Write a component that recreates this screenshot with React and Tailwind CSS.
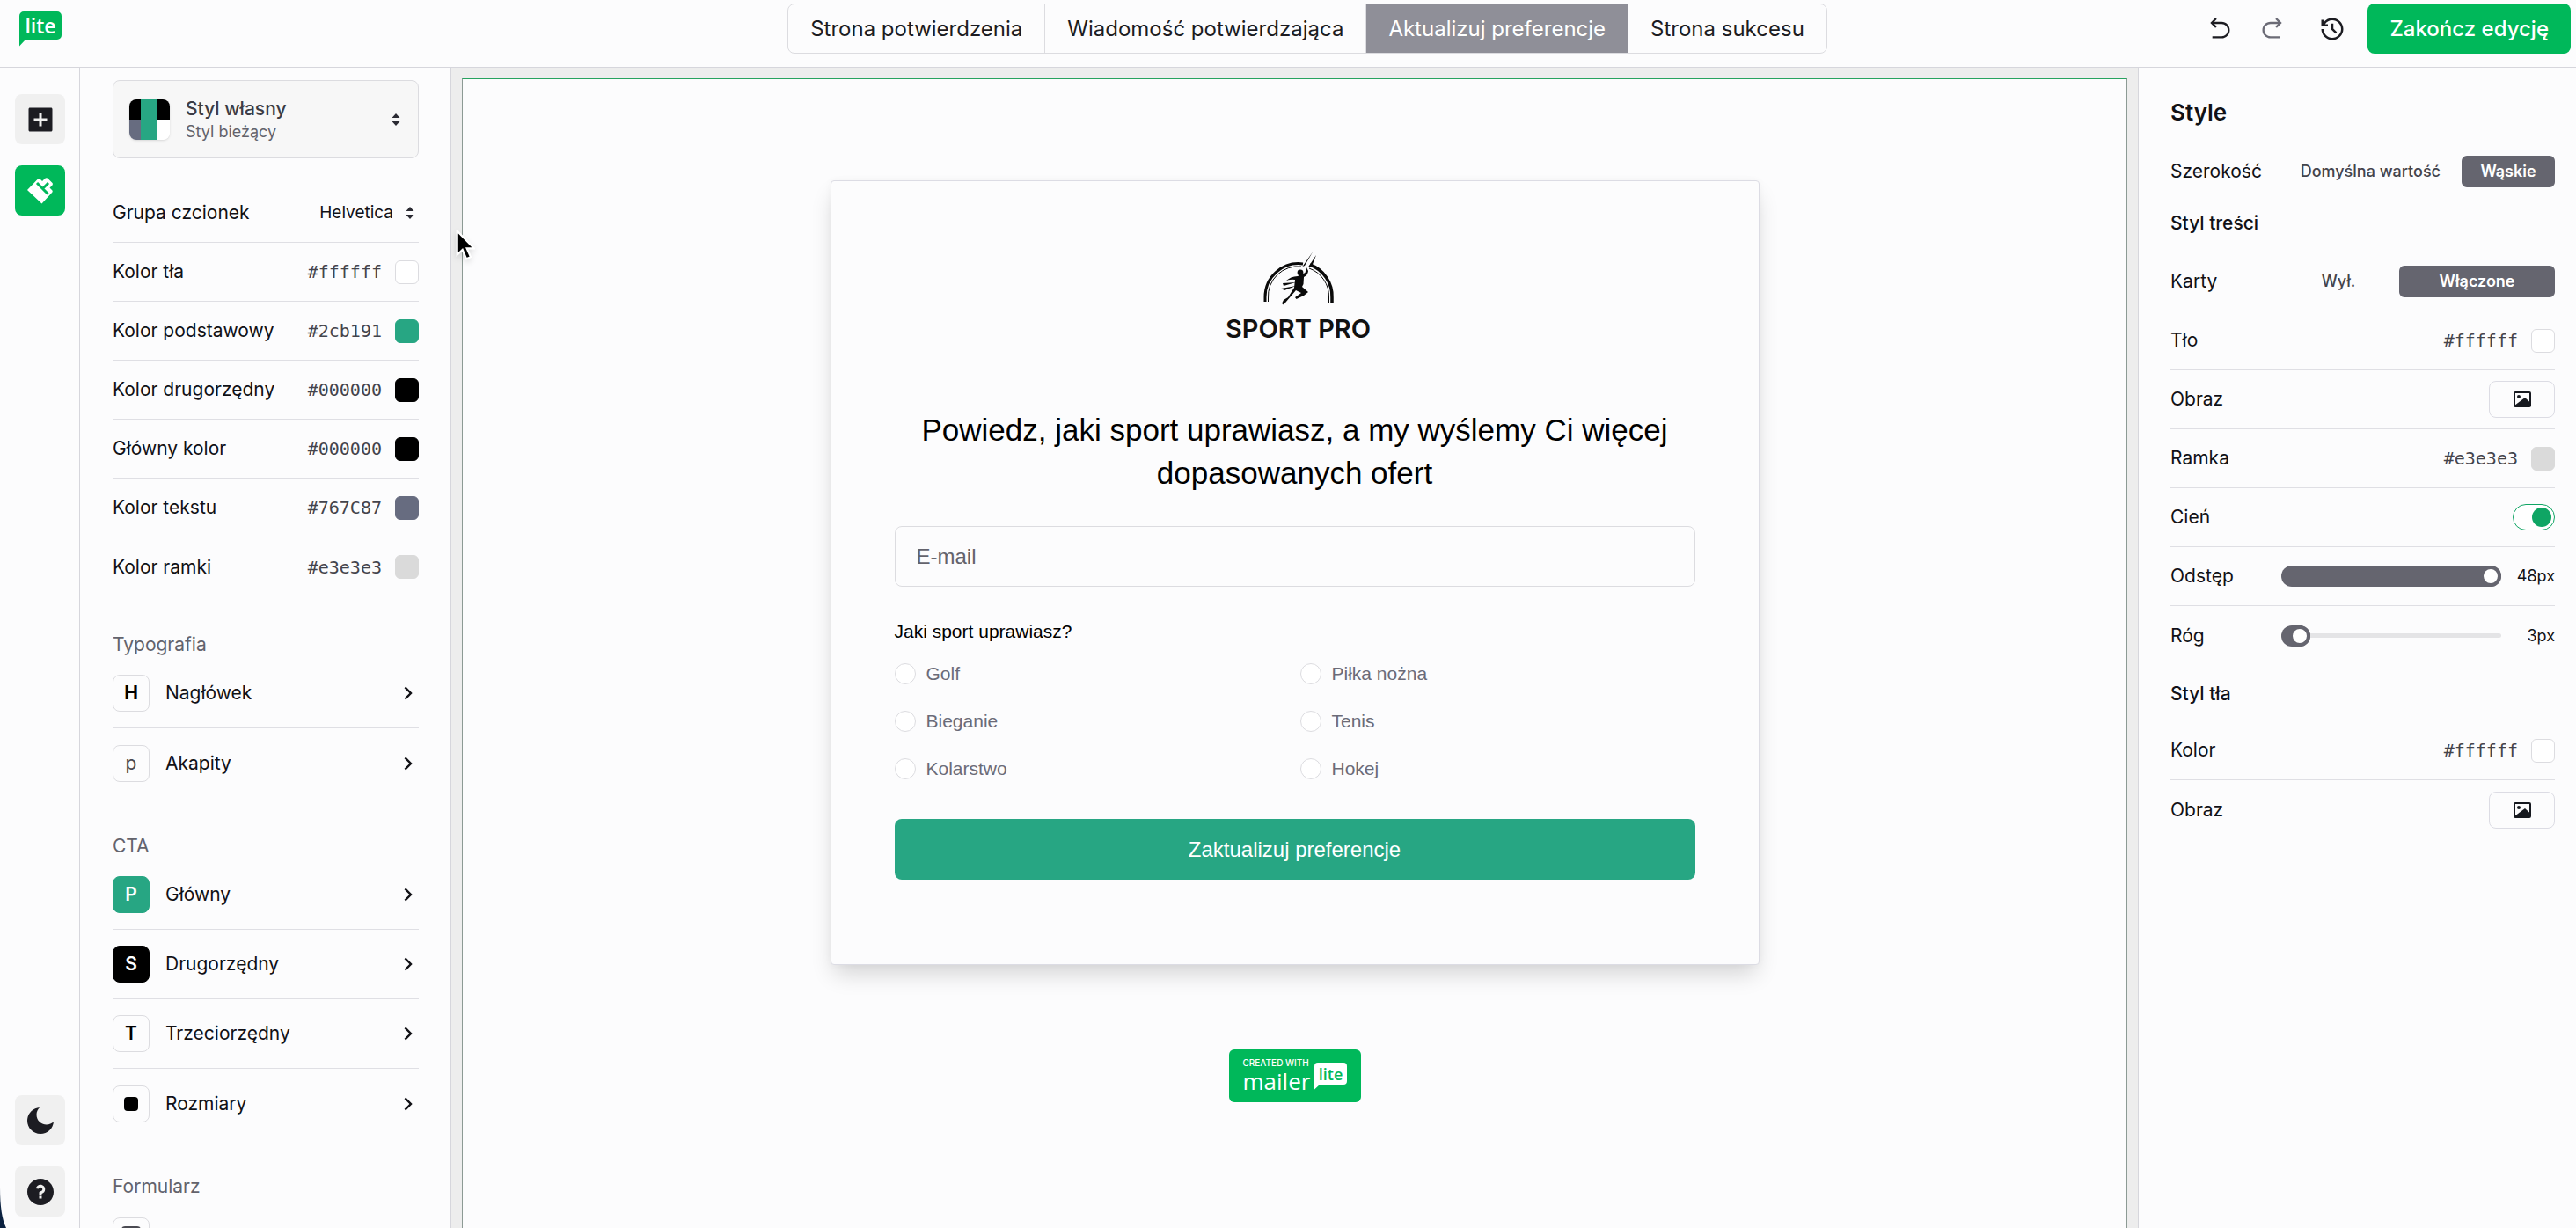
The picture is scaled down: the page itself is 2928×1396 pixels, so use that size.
import React from "react";
import {
  RiAddBoxFill,
  RiArrowGoBackLine,
  RiArrowGoForwardLine,
  RiArrowRightSLine,
  RiHistoryLine,
  RiMoonFill,
  RiQuestionFill,
} from "react-icons/ri";

const tabs = [
  { label: "Strona potwierdzenia" },
  { label: "Wiadomość potwierdzająca" },
  { label: "Aktualizuj preferencje", active: true },
  { label: "Strona sukcesu" },
];

const colors = [
  { id: "bg", label: "Kolor tła", value: "#ffffff", swatch: "bg-white border-[#dcdce0]" },
  { id: "base", label: "Kolor podstawowy", value: "#2cb191", swatch: "bg-[#27a683] border-[#27a683]" },
  { id: "secondary", label: "Kolor drugorzędny", value: "#000000", swatch: "bg-black border-black" },
  { id: "main", label: "Główny kolor", value: "#000000", swatch: "bg-black border-black" },
  { id: "text", label: "Kolor tekstu", value: "#767C87", swatch: "bg-[#676c80] border-[#676c80]" },
  { id: "border", label: "Kolor ramki", value: "#e3e3e3", swatch: "bg-[#dadada] border-[#dadada]" },
];

const typography = [
  { label: "Nagłówek", badge: "H", style: "border-[#dcdce0] text-black font-bold" },
  { label: "Akapity", badge: "p", style: "border-[#dcdce0] text-[#4a4a52]" },
];

const cta = [
  { label: "Główny", badge: "P", style: "border-[#27a683] bg-[#27a683] text-white font-semibold" },
  { label: "Drugorzędny", badge: "S", style: "border-black bg-black text-white font-semibold" },
  { label: "Trzeciorzędny", badge: "T", style: "border-[#dcdce0] text-black font-semibold" },
  { label: "Rozmiary", badge: <span className="block size-4 rounded-sm bg-black" />, style: "border-[#dcdce0]" },
];

const sports = ["Golf", "Piłka nożna", "Bieganie", "Tenis", "Kolarstwo", "Hokej"];

const LiteLogo = () => (
  <svg viewBox="0 0 48 40" className="w-12 h-10" role="img" aria-label="lite">
    <path d="M5 0H43a5 5 0 0 1 5 5V27a5 5 0 0 1-5 5H7L0 39.500V5a5 5 0 0 1 5-5Z" fill="#00b85a" />
    <text x="24" y="25" textAnchor="middle" fill="#fff" fontSize="23" fontWeight="600" fontFamily="Open Sans, sans-serif">
      lite
    </text>
  </svg>
);

const SortIcon = () => (
  <svg viewBox="0 0 10 16" className="w-[10px] h-4 shrink-0" fill="#2b2b33">
    <path d="M5 1 9.500 6H.5ZM5 15 .5 10H9.500Z" />
  </svg>
);

const BrushIcon = () => (
  <svg viewBox="0 0 30 30" className="size-[30px]">
    <path
      d="M0 14 12 1.500Q13.500 .5 15 2L17 4 20 1Q22 -.5 24 1.500L28.500 6Q29.500 7.500 28 9L25.500 11.500 28 14Q29.500 15.500 28 17L16.500 29.500Z"
      fill="#fff"
    />
    <path d="M11 6 23.500 18.500M17.500 12.500 24 6" stroke="#00b85a" strokeWidth="3" fill="none" />
  </svg>
);

const ImageIcon = () => (
  <svg viewBox="0 0 20 18" className="w-5 h-[18px]">
    <rect x="1" y="1" width="18" height="16" rx="1" fill="none" stroke="#16191f" strokeWidth="2" />
    <circle cx="6" cy="6" r="2" fill="#16191f" />
    <path d="M1 16 13 7 19 12.500V17H1Z" fill="#16191f" />
  </svg>
);

const SportLogo = () => (
  <div className="flex flex-col items-center pl-2">
    <svg viewBox="0 0 82 62" className="w-[82px] h-[62px]" aria-hidden="true">
      <path d="M3 57V52A38 38 0 0 1 46 14" fill="none" stroke="#0a0a0a" strokeWidth="3" />
      <path d="M6.500 57V53A34 34 0 0 1 44 17" fill="none" stroke="#0a0a0a" strokeWidth="1" />
      <path d="M54 15A38 38 0 0 1 79 52V59" fill="none" stroke="#0a0a0a" strokeWidth="3.500" />
      <path d="M53 19A34 34 0 0 1 75.500 52V59" fill="none" stroke="#0a0a0a" strokeWidth="1" />
      <path d="M57 .5 45.500 17 48 16ZM61 4 52 17.500 56 17Z" fill="#0a0a0a" />
      <circle cx="43" cy="24" r="3.400" fill="#0a0a0a" />
      <path
        d="M50 18 52 22Q51.500 27 47 29L46.500 37 45 40 52 46 47 50 38.500 54 37 52 44 47 38 44 32 51 24 60.500 22 59 24 55 29 52 36 41 37 32Q30 31 26 34 32 28 40 28L48.500 24Z"
        fill="#0a0a0a"
      />
      <path d="M23 36 38 35 24 39ZM21 42 38 39 25 44Z" fill="#0a0a0a" />
    </svg>
    <p className="mt-2 text-[29px] leading-9 font-semibold text-[#111]">SPORT PRO</p>
  </div>
);

const ColorField = ({ id, label, value, swatch }) => (
  <div className="flex items-center justify-between h-[67px]">
    <label htmlFor={id}>{label}</label>
    <div className="flex items-center gap-[15px]">
      <input
        id={id}
        type="text"
        defaultValue={value}
        className="w-[88px] bg-transparent text-right font-['DejaVu_Sans_Mono',monospace] text-xl text-[#44444c] outline-none"
      />
      <button type="button" aria-label={label} className={`size-[27px] rounded-md border ${swatch}`} />
    </div>
  </div>
);

const NavRow = ({ label, badge, style }) => (
  <button type="button" className="flex items-center w-full h-[79px] text-left">
    <span className={`flex items-center justify-center size-[42px] rounded-lg border ${style}`}>{badge}</span>
    <span className="ml-[18px] flex-1">{label}</span>
    <RiArrowRightSLine className="size-7 -mr-0.5" />
  </button>
);

const ImageField = () => (
  <div className="flex items-center justify-between h-[67px]">
    <span>Obraz</span>
    <button
      type="button"
      aria-label="Obraz"
      className="flex items-center justify-center w-[75px] h-[42px] rounded-lg border border-[#dcdce4]"
    >
      <ImageIcon />
    </button>
  </div>
);

const RangeField = ({ id, label, value, max }) => {
  const percent = (value / max) * 100;
  return (
    <div className="flex items-center h-[67px]">
      <label htmlFor={id} className="w-[126px]">
        {label}
      </label>
      <div className="relative flex items-center flex-1 h-6">
        <div className="w-full h-[5px] rounded-full bg-[#e4e4e6]" />
        <div
          className="absolute left-0 h-6 rounded-full bg-[#65656f]"
          style={{ width: `calc(24px + (100% - 24px) * ${percent / 100})` }}
        />
        <input
          id={id}
          type="range"
          min="0"
          max={max}
          defaultValue={value}
          className="absolute inset-0 w-full h-6 appearance-none bg-transparent [&::-webkit-slider-thumb]:appearance-none [&::-webkit-slider-thumb]:size-6 [&::-webkit-slider-thumb]:rounded-full [&::-webkit-slider-thumb]:border-4 [&::-webkit-slider-thumb]:border-[#65656f] [&::-webkit-slider-thumb]:bg-white"
        />
      </div>
      <span className="w-[61px] text-right text-lg">{value}px</span>
    </div>
  );
};

const Header = () => (
  <header className="grid grid-cols-[1fr_auto_1fr] items-start h-[77px] shrink-0 border-b border-[#d6d6dc] pt-1 pr-1.5">
    <div className="pl-[22px] pt-[9px]">
      <LiteLogo />
    </div>

    <nav className="flex h-[57px] ml-[50px] rounded-lg border border-[#dcdce0] overflow-hidden divide-x divide-[#dcdce0]">
      {tabs.map((tab) => (
        <button
          key={tab.label}
          type="button"
          className={`px-[25px] text-2xl ${tab.active ? "bg-[#8f8f98] text-white" : "text-[#1c1c22]"}`}
        >
          {tab.label}
        </button>
      ))}
    </nav>

    <div className="flex items-center justify-end h-[57px]">
      <button type="button" aria-label="Cofnij" className="mr-[30px]">
        <RiArrowGoBackLine className="size-7 text-[#1c1c22]" />
      </button>
      <button type="button" aria-label="Ponów" className="mr-10">
        <RiArrowGoForwardLine className="size-7 text-[#6b6b76]" />
      </button>
      <button type="button" aria-label="Historia" className="mr-[25px]">
        <RiHistoryLine className="size-[30px] text-[#1c1c22]" />
      </button>
      <button type="button" className="h-[57px] px-[25px] rounded-lg bg-[#00b85a] text-2xl font-medium text-white">
        Zakończ edycję
      </button>
    </div>
  </header>
);

const Rail = () => (
  <aside className="flex flex-col w-[91px] shrink-0 pl-[17px] pt-[30px] pb-[13px] border-r border-[#d6d6dc]">
    <button type="button" aria-label="Dodaj" className="flex items-center justify-center size-[57px] rounded-lg bg-[#f0f0f0]">
      <RiAddBoxFill className="size-9 text-[#1c1c22]" />
    </button>
    <button type="button" aria-label="Style" className="flex items-center justify-center size-[57px] mt-6 rounded-lg bg-[#00b85a]">
      <BrushIcon />
    </button>
    <button type="button" aria-label="Tryb ciemny" className="flex items-center justify-center size-[57px] mt-auto rounded-lg bg-[#f0f0f0]">
      <RiMoonFill className="size-9 text-[#1c1c22]" />
    </button>
    <button type="button" aria-label="Pomoc" className="flex items-center justify-center size-[57px] mt-6 rounded-lg bg-[#f0f0f0]">
      <RiQuestionFill className="size-9 text-[#1c1c22]" />
    </button>
  </aside>
);

const StylePanel = () => (
  <aside className="w-[421px] shrink-0 pl-[37px] pr-9 pt-[14px] overflow-hidden">
    <button
      type="button"
      className="flex items-center w-full h-[89px] pl-[18px] pr-5 rounded-lg border border-[#dcdce0] bg-[#f7f7f7] text-left"
    >
      <span className="grid grid-cols-[13px_19px_14px] grid-rows-2 size-[46px] rounded-lg overflow-hidden shadow-sm">
        <span className="bg-black" />
        <span className="row-span-2 bg-[#27a683]" />
        <span className="bg-black" />
        <span className="bg-[#676c80]" />
        <span className="bg-white" />
      </span>
      <span className="flex-1 ml-[18px]">
        <span className="block font-medium leading-7 text-[#3c3c44]">Styl własny</span>
        <span className="block text-lg leading-6 text-[#63636c]">Styl bieżący</span>
      </span>
      <SortIcon />
    </button>

    <div className="mt-[29px] divide-y divide-[#dfdfe4]">
      <div className="flex items-center justify-between h-[67px]">
        <label htmlFor="font">Grupa czcionek</label>
        <div className="flex items-center gap-[14px] pr-[5px]">
          <select id="font" className="appearance-none field-sizing-content bg-transparent text-[19px] outline-none">
            <option>Helvetica</option>
          </select>
          <SortIcon />
        </div>
      </div>
      {colors.map((color) => (
        <ColorField key={color.id} {...color} />
      ))}
    </div>

    <h3 className="mt-[39px] h-8 leading-8 text-[#63636c]">Typografia</h3>
    <div className="divide-y divide-[#dfdfe4]">
      {typography.map((item) => (
        <NavRow key={item.label} {...item} />
      ))}
    </div>

    <h3 className="mt-[39px] h-8 leading-8 text-[#63636c]">CTA</h3>
    <div className="divide-y divide-[#dfdfe4]">
      {cta.map((item) => (
        <NavRow key={item.label} {...item} />
      ))}
    </div>

    <h3 className="mt-[39px] h-8 leading-8 text-[#63636c]">Formularz</h3>
    <NavRow
      badge={<span className="block size-[22px] rounded-sm border-2 border-[#4a4a52] bg-[#dadada]" />}
      style="border-[#dcdce0]"
    />
  </aside>
);

const Canvas = () => (
  <main className="flex-1 min-w-0 px-3 pt-3 border-x border-[#d6d6dc] bg-[#ededed]">
    <div className="flex flex-col items-center h-full border border-b-0 border-[#8c9a94] border-t-[#27a35f] bg-[#fcfcfd] pt-[115px]">
      <form
        className="w-full max-w-[1056px] px-[72px] pt-[80px] pb-24 rounded-sm border border-[#dcdce4] bg-[#fcfcfd] shadow-[0_14px_24px_-4px_rgba(0,0,0,0.16),0_0_10px_rgba(0,0,0,0.03)] font-['Liberation_Sans',Arial,sans-serif]"
        onSubmit={(e) => e.preventDefault()}
      >
        <div className="font-['Inter',sans-serif]">
          <SportLogo />
        </div>
        <h1 className="mt-[72px] text-center text-[35px] leading-[49px] text-black">
          Powiedz, jaki sport uprawiasz, a my wyślemy Ci więcej dopasowanych ofert
        </h1>
        <input
          type="email"
          aria-label="E-mail"
          placeholder="E-mail"
          className="block w-full h-[69px] mt-9 px-6 rounded-lg border border-[#dcdce0] bg-transparent text-2xl placeholder:text-[#63636c] outline-none"
        />

        <fieldset>
          <legend className="pt-9 h-[72px] text-[21px] leading-[30px] text-black">Jaki sport uprawiasz?</legend>
          <div className="grid grid-cols-2 gap-x-3">
            {sports.map((sport) => (
              <label key={sport} className="flex items-center gap-3 h-[54px] text-[21px] text-[#6b6b78]">
                <input
                  type="radio"
                  name="sport"
                  className="appearance-none size-6 rounded-full border border-[#dcdce0] bg-white"
                />
                {sport}
              </label>
            ))}
          </div>
        </fieldset>

        <button type="submit" className="w-full h-[69px] mt-[30px] rounded-lg bg-[#27a683] text-2xl text-white">
          Zaktualizuj preferencje
        </button>
      </form>

      {/* Footer badge */}
      <a href="#" className="flex items-start w-[150px] h-[60px] mt-24 pl-4 pt-[10px] rounded-md bg-[#00b85a] text-white">
        <span className="font-['Open_Sans',sans-serif]">
          <span className="block font-['Inter',sans-serif] text-[10px] leading-[11px] font-medium">CREATED WITH</span>
          <span className="block text-[26px] leading-[30px]">mailer</span>
        </span>
        <svg viewBox="0 0 37 31" className="w-[37px] h-[31px] mt-[5px] ml-[5px]">
          <path d="M4 0H33a4 4 0 0 1 4 4V21a4 4 0 0 1-4 4H6L0 30.500V4a4 4 0 0 1 4-4Z" fill="#fff" />
          <text x="18.500" y="19.500" textAnchor="middle" fill="#00b85a" fontSize="18" fontWeight="600" fontFamily="Open Sans, sans-serif">
            lite
          </text>
        </svg>
      </a>
    </div>
  </main>
);

const SettingsPanel = () => (
  <aside className="w-[497px] shrink-0 pl-9 pr-6 overflow-hidden">
    <h2 className="mt-[31px] h-10 leading-10 text-[26px] font-semibold">Style</h2>

    <div className="flex items-center justify-between h-[67px] mt-[13px]">
      <span>Szerokość</span>
      <div className="flex items-center gap-6">
        <button type="button" className="text-lg font-medium text-[#44444c]">
          Domyślna wartość
        </button>
        <button type="button" className="w-[106px] h-9 rounded-md bg-[#65656f] text-lg font-semibold text-white">
          Wąskie
        </button>
      </div>
    </div>

    <h3 className="h-[52px] leading-[52px] font-medium">Styl treści</h3>
    <div className="mt-[7px] divide-y divide-[#dfdfe4]">
      <div className="flex items-center justify-between h-[67px]">
        <span>Karty</span>
        <div className="flex items-center">
          <button type="button" className="w-[138px] text-lg font-medium text-[#44444c]">
            Wył.
          </button>
          <button type="button" className="w-[177px] h-9 rounded-md bg-[#65656f] text-lg font-semibold text-white">
            Włączone
          </button>
        </div>
      </div>
      <ColorField id="card-bg" label="Tło" value="#ffffff" swatch="bg-white border-[#dcdce0]" />
      <ImageField />
      <ColorField id="card-border" label="Ramka" value="#e3e3e3" swatch="bg-[#dadada] border-[#dadada]" />
      <div className="flex items-center justify-between h-[67px]">
        <label htmlFor="shadow">Cień</label>
        <span className="relative flex items-center">
          <input
            id="shadow"
            type="checkbox"
            defaultChecked
            className="appearance-none w-12 h-[30px] rounded-full border border-[#0fa564] bg-white"
          />
          <span className="absolute right-1 size-[22px] rounded-full bg-[#0fa564] pointer-events-none" />
        </span>
      </div>
      <RangeField id="spacing" label="Odstęp" value={48} max={48} />
      <RangeField id="radius" label="Róg" value={3} max={72} />
    </div>

    <h3 className="h-[64px] leading-[66px] font-medium">Styl tła</h3>
    <div className="divide-y divide-[#dfdfe4]">
      <ColorField id="page-bg" label="Kolor" value="#ffffff" swatch="bg-white border-[#dcdce0]" />
      <ImageField />
    </div>
  </aside>
);

const App = () => {
  return (
    <div className="relative flex flex-col h-screen overflow-hidden bg-[#fcfcfd] font-['Inter',sans-serif] text-[21px] text-[#111116]">
      <Header />
      <div className="flex flex-1 min-h-0">
        <Rail />
        <StylePanel />
        <Canvas />
        <SettingsPanel />
      </div>

      {/* Mouse pointer */}
      <svg viewBox="0 0 20 32" className="absolute left-[518px] top-[261px] w-[22px] h-[35px] drop-shadow-md">
        <path d="M1.500 1.500V26L7 21 11 30.500 15.500 28.500 11.500 19.500H19Z" fill="#000" stroke="#fff" strokeWidth="2" />
      </svg>
      {/* Window corner */}
      <svg viewBox="0 0 7 46" className="absolute left-0 bottom-0 w-[7px] h-[46px]">
        <path d="M0 0Q0 32 7 46H0Z" fill="#0b2240" />
      </svg>
    </div>
  );
};

export default App;
